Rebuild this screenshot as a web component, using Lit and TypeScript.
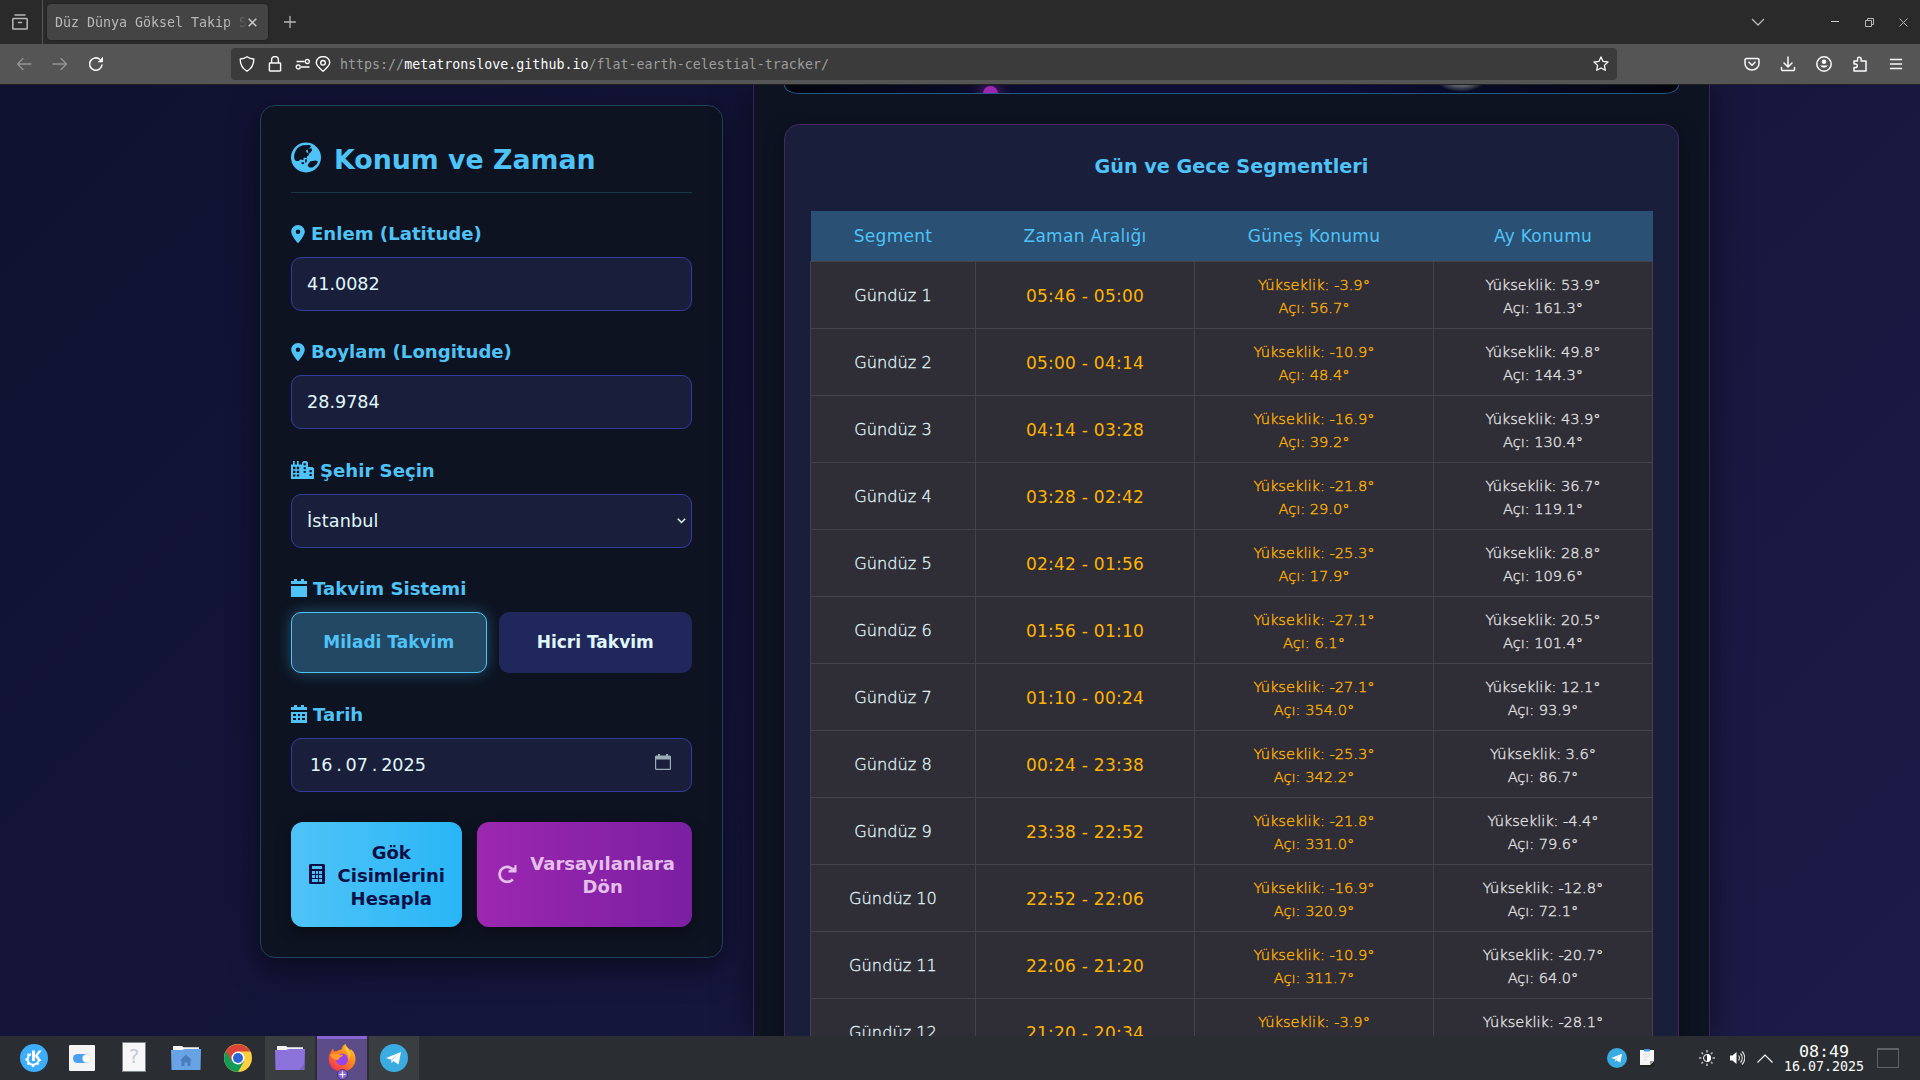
import { LitElement, html, svg, css } from "lit";
import { customElement } from "lit/decorators.js";

const icon = (w: number, h: number, vb: string, body: unknown) =>
  html`<svg width=${w} height=${h} viewBox=${vb} fill="none" stroke="none">${body}</svg>`;

const line = (d: string, sw = 1.3) =>
  icon(16, 16, "0 0 16 16", svg`<path d=${d} stroke="currentColor" stroke-width=${sw} stroke-linecap="round" stroke-linejoin="round"/>`);

const pin = icon(14, 18, "0 0 384 512", svg`<path fill="currentColor" d="M215.7 499.2C267 435 384 279.4 384 192C384 86 298 0 192 0S0 86 0 192c0 87.4 117 243 168.3 307.2c12.3 15.3 35.1 15.3 47.4 0zM192 128a64 64 0 1 1 0 128 64 64 0 1 1 0-128z"/>`);

const globe = icon(30, 31, "0 0 30 31", svg`
  <circle cx="15" cy="15.500" r="15" fill="currentColor"/>
  <path fill="#0d1321" d="M3.500 17.500C2 11 6 4.500 12 3.300L18.500 3 20 4 19 6 16.500 7.500 15 8.500 15.500 10.500 17.500 11 18 13 16 14.500 15.500 16.500 14 15.500 12.500 16 12.500 18 9 17.500 8 19 5 19z"/>
  <path fill="#0d1321" d="M16.500 7l4-.8.500 2-2 3-1.500.3-.5-2z"/>
  <path fill="#0d1321" d="M17 22.500L19 19.500 24.500 18.500 27 19.500 25.500 22.500 21.500 25.500 18.500 25.500 16.800 24z"/>
  <path fill="#0d1321" d="M14.300 17l1.700.5-.3 2.500-1.700.8zM10 20.500l2.500-.5.8 1.700-2.300.5z"/>`);

const city = icon(23, 18, "0 0 23 18", svg`
  <path fill="currentColor" fill-rule="evenodd" d="M0 3.500h2V0h1.700v3.500H6V0h1.700v3.500H11V1.500L12.500 0h3L17 1.500V6h4.500L23 7.500V18H0zM2 5.800v2.400h2.400V5.800zm3.800 0v2.400h2.400V5.800zM2 9.800v2.300h2.400V9.800zm3.800 0v2.300h2.400V9.800zM2 13.600v1.800h2.400v-1.800zm3.800 0v1.800h2.400v-1.800zM12.600 2.300v2h2.200v-2zm0 4v2h2.200v-2zm0 3.700v1.800h2.200V10zM18.500 9v2.300h2.300V9zm0 4v2h2.300v-2z"/>`);

const calSolid = icon(16, 18, "0 0 16 18", svg`<path fill="currentColor" d="M0 2h3V0h3v2h4V0h3v2h3v3H0zM0 7h16v11H0z"/>`);

const calDays = icon(16, 18, "0 0 16 18", svg`<path fill="currentColor" fill-rule="evenodd" d="M0 2h3V0h3v2h4V0h3v2h3v3H0zM0 7h16V18H0zM2 9v2h3V9zm5 0v2h2V9zM11 9v2h3V9zM2 13v2h3v-2zm5 0v2h2v-2zm4 0v2h3v-2z"/>`);

const calc = icon(16, 20, "0 0 16 20", svg`<path fill="currentColor" fill-rule="evenodd" d="M1.500 0h13A1.500 1.500 0 0 1 16 1.500v17a1.500 1.500 0 0 1-1.500 1.500h-13A1.500 1.500 0 0 1 0 18.500v-17A1.500 1.500 0 0 1 1.500 0zM3 2v3h10V2zM3 7v3h3V7zm4 0v3h2V7zm3 0v3h3V7zM3 11v3h3v-3zm4 0v3h2v-3zm3 0v3h3v-3zM3 15v3h6v-3zm7 0v3h3v-3z"/>`);

const rotate = icon(20, 18, "0 0 20 18", svg`<path d="M16.800 6A7.500 7.500 0 1 0 15.800 14.300" stroke="currentColor" stroke-width="2.700"/><path d="M19.500 0V7.500H11.500V5.500L14.500 4.500 17.500 2V0z" fill="currentColor"/>`);

const datePick = icon(16, 16, "0 0 16 16", svg`<path d="M.6 3.500h14.800v11.200a.8.800 0 0 1-.8.700H1.400a.8.800 0 0 1-.8-.7z" stroke="#9aacb5" stroke-width="1.200"/><path d="M0 5.500V2.500L1 1.500h2V0h2v1.500h6V0h2v1.500h2l1 1v3z" fill="#9aacb5"/>`);

const chevSmall = icon(9, 6, "0 0 9 6", svg`<path d="M.8.800l3.700 3.700L8.200.8" stroke="#e0f7fa" stroke-width="1.500"/>`);

const tg = (s: number) => icon(s, s, "0 0 28 28", svg`<circle cx="14" cy="14" r="14" fill="#3bace2"/><path d="M6 14L21 8 18.500 20.500 13.500 17 11.500 19 11 15.500z" fill="#fff"/><path d="M11 15.500L18.500 9.800 12.500 16.300 11.500 19z" fill="#b9d9ec"/>`);

const kde = icon(28, 28, "0 0 28 28", svg`<circle cx="14" cy="14" r="14" fill="#3daefd"/>
  <path d="M11 10A5.600 5.600 0 1 0 18.500 17" stroke="#fff" stroke-width="2"/>
  <path d="M7.500 10l1.700 1.500M5.500 15.500h2.300M7.500 20.500l1.700-1.600M13 23v-2.500M18.500 20.500l-1.600-1.600M20 16.500l-2-.3" stroke="#fff" stroke-width="2.300"/>
  <path d="M12 6.500h3v5L18.800 6.500h3L17.800 11.600 21.500 17h-3.200l-3.300-4.700V17h-3z" fill="#fff"/>`);

const toggle = icon(26, 26, "0 0 26 26", svg`<rect width="26" height="26" rx="1" fill="#f4f4f4"/><rect x="4" y="9" width="17" height="9" rx="4.500" fill="#4a9ff0"/><circle cx="17.700" cy="13.500" r="4.200" fill="#fff" stroke="#cfd3d6" stroke-width=".5"/>`);

const unknownDoc = html`<span class="qdoc">?</span>`;

const folder = (c: string, home: boolean) => icon(30, 24, "0 0 30 24", svg`<path d="M2 0h9l1.500 1.200H28V8H2z" fill="#f3f3f3"/><path d="M0 4h11l3-1h16l-.5 21H.5z" fill=${c}/>
  ${home ? svg`<path d="M15 8.500L21 14.500h-1.500V20h-3v-3.500h-3V20h-3v-5.500H9z" fill="#4a7dbb"/>` : svg`<path d="M24 24l5-6v6z" fill="#7a63c0"/>`}`);

const chrome = icon(28, 28, "0 0 28 28", svg`<circle cx="14" cy="14" r="14" fill="#fdd041"/>
  <path d="M14 14L1.900 7A14 14 0 0 0 14 28L20 17.500z" fill="#119d58"/>
  <path d="M1.900 7A14 14 0 0 1 26.100 7.500H14L8 17.500z" fill="#db4437"/>
  <circle cx="14" cy="14" r="6.500" fill="#fff"/><circle cx="14" cy="14" r="5" fill="#2a66d4"/>`);

const firefox = icon(28, 28, "0 0 28 28", svg`
  <defs><linearGradient id="ff" x1="1" y1="0" x2="0.200" y2="1"><stop offset="0" stop-color="#ffd43a"/><stop offset=".45" stop-color="#ff8a1f"/><stop offset="1" stop-color="#f5304f"/></linearGradient></defs>
  <path d="M14 27.500C6 27.500.8 22 .8 15.500.8 10 3 7 5 4.500l1 3 3-.5L14 5c0-2 1-4 3.500-5 .5 3 3 3.500 4.500 6l1.500-.5C26 8 27.500 11 27.500 15 27.500 22 22 27.500 14 27.500z" fill="url(#ff)"/>
  <circle cx="14" cy="15.500" r="6" fill="#9645e8"/>
  <path d="M2 11c3-2 6-2.500 9-.5l4 .5c-1 2.500-4 2-4.500 4.500C7.500 17 4 14.500 2 11z" fill="#ff9a2a"/>
  <path d="M17.500 2c-1.500 3 .5 5 2 7s1.500 4 .5 6c4-2 4-8-2.500-13z" fill="#ffc43a"/>`);

const TIMES = ["05:46","05:00","04:14","03:28","02:42","01:56","01:10","00:24","23:38","22:52","22:06","21:20","20:34"];
const SUN = [["-3.9","56.7"],["-10.9","48.4"],["-16.9","39.2"],["-21.8","29.0"],["-25.3","17.9"],["-27.1","6.1"],["-27.1","354.0"],["-25.3","342.2"],["-21.8","331.0"],["-16.9","320.9"],["-10.9","311.7"],["-3.9",""]];
const MOON = [["53.9","161.3"],["49.8","144.3"],["43.9","130.4"],["36.7","119.1"],["28.8","109.6"],["20.5","101.4"],["12.1","93.9"],["3.6","86.7"],["-4.4","79.6"],["-12.8","72.1"],["-20.7","64.0"],["-28.1",""]];

@customElement("browser-chrome")
class BrowserChrome extends LitElement {
  static styles = css`
    :host { display: block; height: 85px; font: 13.3px "DejaVu Sans Mono", "Liberation Mono", monospace; color: #fbfbfe; }
    svg { display: block; flex: none; }
    .tabs { display: flex; height: 44px; background: #2a2a2a; color: #b8b8b8; }
    .view { width: 43px; display: flex; align-items: center; padding-left: 12px; box-sizing: border-box; border-right: 1px solid #555; }
    .tab { display: flex; align-items: center; width: 221px; height: 36px; margin: 4px 0 0 4px; background: #444; border-radius: 4px; box-shadow: 0 0 2px #0008; padding: 0 11px 0 8px; box-sizing: border-box; }
    .name { flex: 1; overflow: hidden; white-space: nowrap; -webkit-mask-image: linear-gradient(90deg, #000 88%, transparent 100%); }
    .slot { display: flex; align-items: center; justify-content: center; flex: none; }
    .grow { flex: 1; }
    .bar { display: flex; align-items: center; height: 40px; background: #555; border-bottom: 1px solid #202020; padding: 0 6px; }
    .dim { color: #949494; }
    .url { display: flex; align-items: center; width: 1386px; height: 32px; margin-left: 117px; background: #3b3b3b; border-radius: 4px; padding: 0 2px; box-sizing: border-box; white-space: pre; }
    .url .txt { flex: 1; color: #9d9d9d; margin-left: 11px; letter-spacing: .01px; }
    .url b { color: #fbfbfe; font-weight: 400; }
  `;
  private slotOf(content: unknown, w = 36, cls = "") {
    return html`<span class="slot ${cls}" style="width:${w}px">${content}</span>`;
  }
  render() {
    return html`
      <div class="tabs">
        <div class="view">${line("M3 1h10M1.500 4.500h13a.8.800 0 0 1 .7.800v9a.8.800 0 0 1-.8.800H1.600a.8.800 0 0 1-.8-.8v-9a.8.800 0 0 1 .7-.8zM6.500 8.500h3", 1.5)}</div>
        <div class="tab"><span class="name">Düz Dünya Göksel Takip S</span>${icon(9, 9, "0 0 9 9", svg`<path d="M.7.700l7.600 7.600M8.300.7L.7 8.300" stroke="#ccc" stroke-width="1.500"/>`)}</div>
        ${this.slotOf(line("M8 2.500v11M2.500 8h11"), 43)}
        <span class="grow"></span>
        ${this.slotOf(icon(14, 8, "0 0 14 8", svg`<path d="M1 1l6 6 6-6" stroke="currentColor" stroke-width="1.300"/>`), 36)}
        ${this.slotOf("", 42)}
        ${this.slotOf(icon(8, 2, "0 0 8 2", svg`<path d="M0 .5h8" stroke="#ccc"/>`), 34)}
        ${this.slotOf(icon(9, 9, "0 0 9 9", svg`<path d="M.5 2.500h6v6h-6zM2.500 2.500v-2h6v6h-2" stroke="currentColor"/>`), 34)}
        ${this.slotOf(icon(9, 9, "0 0 9 9", svg`<path d="M.5.500l8 8M8.500.5l-8 8" stroke="currentColor"/>`), 34)}
      </div>
      <div class="bar">
        ${this.slotOf(line("M15 8H1.500M7 2.500L1.500 8 7 13.500"), 36, "dim")}
        ${this.slotOf(line("M1 8h13.500M9 2.500L14.500 8 9 13.500"), 36, "dim")}
        ${this.slotOf(icon(16, 16, "0 0 16 16", svg`<path d="M14 8.500A6.200 6.200 0 1 1 12 3.500" stroke="currentColor" stroke-width="1.600"/><path d="M15 .8V6.200H9.600z" fill="currentColor"/>`), 36)}
        <div class="url">
          ${this.slotOf(line("M8 .8C10 2.300 12.500 3 14.800 3c0 5-2 9.500-6.800 12.200C3.200 12.500 1.200 8 1.200 3 3.500 3 6 2.300 8 .8z", 1.4), 28)}
          ${this.slotOf(line("M3 7h10a.6.600 0 0 1 .6.600v6.800a.6.600 0 0 1-.6.600H3a.6.600 0 0 1-.6-.6V7.600A.6.600 0 0 1 3 7zM4.600 7V4a3.400 3.400 0 0 1 6.800 0v3", 1.4), 28)}
          ${this.slotOf(icon(16, 16, "0 0 16 16", svg`<path d="M1.500 5.500h8M6 11h8.500" stroke="currentColor" stroke-width="1.400"/><circle cx="12.300" cy="5.500" r="2" stroke="currentColor" stroke-width="1.300"/><circle cx="3.200" cy="11" r="2" stroke="currentColor" stroke-width="1.300"/>`), 28)}
          ${this.slotOf(icon(16, 16, "0 0 16 16", svg`<path d="M8 15.200C5 12.500 1.300 10 1.300 6.500a6.700 5.900 0 0 1 13.400 0C14.700 10 11 12.500 8 15.200z" stroke="currentColor" stroke-width="1.400"/><circle cx="8" cy="6.800" r="2.300" stroke="currentColor" stroke-width="1.400"/>`), 12)}
          <span class="txt">https://<b>metatronslove.github.io</b>/flat-earth-celestial-tracker/</span>
          ${this.slotOf(line("M8 .9l2.100 4.500 4.900.6-3.600 3.400.9 4.900L8 12l-4.300 2.300.9-4.900L1 6l4.900-.6z", 1.3), 28)}
        </div>
        <span class="grow"></span>
        ${this.slotOf(line("M2.500 2.500h11a1.500 1.500 0 0 1 1.500 1.500v3.500a7 6.500 0 0 1-14 0V4a1.500 1.500 0 0 1 1.500-1.500zM5 6.300l3 2.900 3-2.900", 1.5))}
        ${this.slotOf(line("M8 1v9.500M4 7l4 4 4-4M1.500 11.500v1.700a1.300 1.300 0 0 0 1.300 1.300h10.400a1.300 1.300 0 0 0 1.300-1.300v-1.700", 1.5))}
        ${this.slotOf(icon(16, 16, "0 0 16 16", svg`<circle cx="8" cy="8" r="7.200" stroke="currentColor" stroke-width="1.500"/><circle cx="8" cy="5.700" r="2.300" fill="currentColor"/><path d="M4 9.500h8a4.500 4 0 0 1-8 0z" fill="currentColor"/>`))}
        ${this.slotOf(line("M2 5h3.500V3a1.800 1.800 0 0 1 3.600 0v2h4.900v10H2v-3.400h1.500a1.800 1.800 0 0 0 0-3.600H2z", 1.5))}
        ${this.slotOf(line("M2.500 3.500h11M2.500 8h11M2.500 12.500h11", 1.5))}
      </div>`;
  }
}

@customElement("location-form")
class LocationForm extends LitElement {
  static styles = css`
    :host { display: block; box-sizing: border-box; width: 463px; height: 853px; margin-top: 20px; padding: 30px; background: #0d1321; border: 1px solid #20425b; border-radius: 15px; box-shadow: 0 10px 30px rgba(0,0,0,.5); color: #4fc3f7; }
    svg { display: block; flex: none; }
    h2 { display: flex; align-items: center; gap: 13px; margin: 0 0 25px; height: 57px; padding-bottom: 13px; box-sizing: border-box; border-bottom: 1px solid #1b3549; font-size: 26.8px; line-height: 44px; white-space: nowrap; }
    h2 span { padding-top: 5px; }
    h2 svg { margin-bottom: 1px; }
    .group { margin-bottom: 25.33px; }
    label { display: flex; align-items: center; height: 39px; padding-bottom: 8px; box-sizing: border-box; gap: 6px; font-size: 18.1px; font-weight: 700; white-space: nowrap; }
    .field { display: flex; align-items: center; width: 100%; height: 54px; box-sizing: border-box; padding: 0 15px; background: #191f3b; border: 1px solid #333d99; border-radius: 10px; color: #e0f7fa; font: 17.6px "DejaVu Sans", sans-serif; outline: none; }
    .select { justify-content: space-between; padding-right: 5px; letter-spacing: .15px; }
    .date { justify-content: space-between; padding: 0 20px 0 18px; word-spacing: -1.8px; }
    .date svg { margin-bottom: 6px; }
    .pair { display: flex; gap: 12px; height: 61px; margin-bottom: 26px; }
    .cal { flex: 1 1 0; min-width: 0; border-radius: 10px; background: #20275a; color: #e0f7fa; border: 0; font: 700 17px "DejaVu Sans", sans-serif; padding: 0; white-space: nowrap; }
    .cal.on { background: #234863; color: #4fc3f7; border: 1px solid #4fc3f7; box-shadow: 0 0 15px rgba(79,195,247,.35); }
    .actions { display: flex; gap: 15px; height: 105px; margin-top: 30px; }
    .act { display: flex; align-items: center; border: 0; border-radius: 12px; font: 700 18px/23px "DejaVu Sans", sans-serif; box-shadow: 0 5px 15px rgba(0,0,0,.4); text-align: center; padding: 0 17px 0 18px; white-space: nowrap; justify-content: space-between; }
    .act span { padding-top: 2px; }
    .go { width: 171px; background: linear-gradient(90deg, #4fc3f7, #29b6f6); color: #0a1045; }
    .reset { width: 215px; background: linear-gradient(90deg, #9c27b0, #7b1fa2); color: #e4bfe9; padding-left: 20px; }
  `;
  render() {
    return html`
      <h2>${globe}<span>Konum ve Zaman</span></h2>
      <div class="group"><label>${pin}<span>Enlem (Latitude)</span></label><input class="field" value="41.0082" /></div>
      <div class="group"><label>${pin}<span>Boylam (Longitude)</span></label><input class="field" value="28.9784" /></div>
      <div class="group"><label>${city}<span>Şehir Seçin</span></label><div class="field select"><span>İstanbul</span>${chevSmall}</div></div>
      <div class="group"><label>${calSolid}<span>Takvim Sistemi</span></label>
        <div class="pair"><button class="cal on">Miladi Takvim</button><button class="cal">Hicri Takvim</button></div></div>
      <div class="group"><label>${calDays}<span>Tarih</span></label><div class="field date"><span>16 . 07 . 2025</span>${datePick}</div></div>
      <div class="actions">
        <button class="act go">${calc}<span>Gök<br />Cisimlerini<br />Hesapla</span></button>
        <button class="act reset">${rotate}<span>Varsayılanlara<br />Dön</span></button>
      </div>`;
  }
}

@customElement("segment-panel")
class SegmentPanel extends LitElement {
  static styles = css`
    :host { display: block; box-sizing: border-box; width: 957px; height: 951px; padding: 0 30px; background: #0d1321; border: solid #40205a; border-width: 0 1px; box-shadow: 0 0 30px rgba(0,0,0,.5); overflow: hidden; }
    .sky { position: relative; height: 9px; box-sizing: border-box; border: 1px solid #245a86; border-top: 0; border-radius: 0 0 15px 15px / 0 0 9px 9px; background: linear-gradient(90deg, #05050f, #0c0e33 30%, #0c0e38 60%, #05050f); overflow: hidden; }
    .orb { position: absolute; left: 198px; top: 1px; width: 15px; height: 15px; border-radius: 50%; background: #9c27b0; box-shadow: 0 0 15px #9c27b0; }
    .moon { position: absolute; left: 650px; top: -22px; width: 52px; height: 29px; border-radius: 50%; background: radial-gradient(closest-side, #8a8c90, #585c66 60%, transparent); }
    .card { height: 940px; margin-top: 30px; box-sizing: border-box; padding: 0 25px; border: 1px solid #4a2268; border-radius: 15px; background: #191f3b; box-shadow: 0 5px 20px rgba(0,0,0,.4); }
    h3 { margin: 0; height: 86px; padding-top: 29px; box-sizing: border-box; text-align: center; font-size: 19.2px; line-height: 26px; color: #4fc3f7; }
    .row { display: grid; grid-template-columns: 166px 219px 239px 219px; height: 67px; box-sizing: border-box; background: #2f2d36; border-top: 1px solid #454349; }
    .head { height: 50px; margin-left: 1px; grid-template-columns: 165px 219px 239px 219px; background: #2a5074; border: 0; }
    .cell { display: flex; flex-direction: column; align-items: center; justify-content: center; padding-top: 1px; border-right: 1px solid #454349; font-size: 16px; white-space: nowrap; color: #e0f7fa; }
    .head .cell { border-color: transparent; color: #4fc3f7; font-size: 17px; letter-spacing: .3px; padding: 0; }
    .seg { font-weight: 200; font-size: 16.2px; border-left: 1px solid #454349; -webkit-text-stroke: .3px currentColor; }
    .time { color: #ffb300; font-size: 17px; letter-spacing: .25px; }
    .sun, .lunar { font-size: 14.6px; line-height: 23px; color: #ffb300; font-weight: 200; -webkit-text-stroke: .35px currentColor; padding-top: 2px; }
    .lunar { color: #e0e0e0; letter-spacing: -.05px; }
  `;
  private position(kind: string, [height, angle]: string[]) {
    return html`<span class="cell ${kind}"><span>Yükseklik: ${height}°</span><span>${angle ? `Açı: ${angle}°` : "\u00a0"}</span></span>`;
  }
  render() {
    return html`
      <div class="sky"><span class="orb"></span><span class="moon"></span></div>
      <div class="card">
        <h3>Gün ve Gece Segmentleri</h3>
        <div class="row head">${["Segment", "Zaman Aralığı", "Güneş Konumu", "Ay Konumu"].map((t) => html`<span class="cell">${t}</span>`)}</div>
        ${SUN.map((s, i) => html`<div class="row">
          <span class="cell seg">Gündüz ${i + 1}</span>
          <span class="cell time">${TIMES[i]} - ${TIMES[i + 1]}</span>
          ${this.position("sun", s)}${this.position("lunar", MOON[i])}
        </div>`)}
      </div>`;
  }
}

@customElement("task-bar")
class TaskBar extends LitElement {
  static styles = css`
    :host { display: flex; height: 44px; background: #2a2e32; color: #fcfcfc; padding-left: 9px; box-sizing: border-box; font-family: "DejaVu Sans Mono", monospace; position: relative; }
    svg { display: block; flex: none; }
    .app { position: relative; display: flex; align-items: center; justify-content: center; width: 50px; margin-right: 2px; flex: none; }
    .first { margin-right: -2px; }
    .open { background: #3a3e41; }
    .active { background: #5b4b87; box-shadow: inset 0 3px #8766d4; }
    .plus { position: absolute; left: 20px; bottom: 0; }
    .qdoc { width: 24px; height: 30px; margin-bottom: 2px; box-sizing: border-box; border: 1px solid #7d858b; background: #f7f7f7; color: #c6c9dc; font: 20px/27px "DejaVu Sans", sans-serif; text-align: center; }
    .grow { flex: 1; }
    .tray { display: flex; align-items: center; }
    .slot { display: flex; justify-content: center; flex: none; }
    .gap { width: 34px; }
    .clock { width: 100px; display: flex; flex-direction: column; align-items: center; }
    .h { font-size: 16.7px; line-height: 17px; }
    .d { font-size: 13.3px; line-height: 14px; }
    .edge { padding: 0 21px 0 3px; }
    .desk { width: 22px; height: 20px; box-sizing: border-box; border: 1px solid #5d6367; border-top-width: 2px; }
  `;
  render() {
    return html`
      <span class="app first">${kde}</span>
      <span class="app">${toggle}</span>
      <span class="app">${unknownDoc}</span>
      <span class="app">${folder("#68a3e6", true)}</span>
      <span class="app">${chrome}</span>
      <span class="app open">${folder("#8b73db", false)}</span>
      <span class="app active">${firefox}<span class="plus">${icon(11, 11, "0 0 11 11", svg`<circle cx="5.500" cy="5.500" r="5" fill="#8766d4" stroke="#3a2f5a" stroke-width=".8"/><path d="M5.500 2.500v6M2.500 5.500h6" stroke="#fff" stroke-width="1.200"/>`)}</span></span>
      <span class="app open">${tg(28)}</span>
      <span class="grow"></span>
      <div class="tray">
        <span class="slot" style="width:30px">${tg(20)}</span>
        <span class="slot" style="width:30px">${icon(14, 18, "0 0 14 18", svg`<path d="M0 1h14v17H0z" fill="#222"/><path d="M0 1h14v11l-4 4H0z" fill="#f5f5f5"/><path d="M14 12l-4 4v-4z" fill="#999"/><rect x="4" width="6" height="2.500" rx="1" fill="#3d9bf0"/><path d="M3 5l2 .5 3-.5 2 .5M4 8h5M4 11l3-.5" stroke="#ddd"/>`)}</span>
        <span class="gap"></span>
        <span class="slot" style="width:22px">${icon(16, 16, "0 0 16 16", svg`<path d="M8 0v2.500M8 13.500V16M0 8h2.500M13.500 8H16M2.500 2.500L4 4M12 12l1.500 1.500M13.500 2.500L12 4M4 12l-1.500 1.500" stroke="#bbb" stroke-width="1.500"/><circle cx="8" cy="8" r="3.500" stroke="#fff"/><path d="M8 4a4 4 0 0 1 0 8z" fill="#fff"/>`)}</span>
        <span class="slot" style="width:38px">${icon(15, 14, "0 0 15 14", svg`<path d="M0 4.500h2.500L6.500 1v12l-4-3.500H0z" fill="#fff"/><path d="M8.500 4.500a4 4 0 0 1 0 5M10.500 2.500a6.500 6.500 0 0 1 0 9M12 .5a9 9 0 0 1 0 13" stroke="#ddd" stroke-width="1.100"/>`)}</span>
        <span class="slot" style="width:18px">${icon(16, 9, "0 0 16 9", svg`<path d="M.5 8.500L8 1l7.500 7.500" stroke="#fff" stroke-width="1.200"/>`)}</span>
        <div class="clock"><span class="h">08:49</span><span class="d">16.07.2025</span></div>
        <span class="slot edge"><span class="desk"></span></span>
      </div>`;
  }
}

@customElement("app-root")
class AppRoot extends LitElement {
  static styles = css`
    :host { display: block; width: 1920px; height: 1080px; overflow: hidden; font-family: "DejaVu Sans", sans-serif; }
    .page { display: flex; gap: 30px; height: 951px; box-sizing: border-box; padding-left: 260px; background: linear-gradient(135deg, #101231, #14153a 45%, #1c1b48); overflow: hidden; }
  `;
  render() {
    return html`
      <browser-chrome></browser-chrome>
      <div class="page"><location-form></location-form><segment-panel></segment-panel></div>
      <task-bar></task-bar>`;
  }
}
